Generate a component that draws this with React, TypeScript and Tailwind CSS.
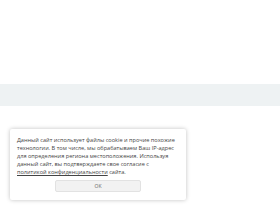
export default function App() {
  return (
    <div className="relative w-[280px] h-[210px] bg-white overflow-hidden font-['Open_Sans',sans-serif]">
      {/* page content behind */}
      <div className="h-[84px]" />
      <div className="h-[22px] bg-[#eef2f3]" />

      {/* Cookie notice */}
      <div className="absolute left-[10px] bottom-[10px] w-[176px] bg-white rounded-[2px] shadow-[0_0_4px_rgba(0,0,0,0.25)] px-[7px] pt-[7px] pb-[8px]">
        <p className="text-[5.6px] leading-[8px] text-[#444] whitespace-nowrap">
          Данный сайт использует файлы cookie и прочие похожие
          <br />
          технологии. В том числе, мы обрабатываем Ваш IP-адрес
          <br />
          для определения региона местоположения. Используя
          <br />
          данный сайт, вы подтверждаете свое согласие с
          <br />
          <a href="#" className="underline">политикой конфиденциальности</a> сайта.
        </p>
        <div className="flex justify-center mt-[4px]">
          <button className="w-[86px] h-[12px] bg-[#f2f2f2] border border-[#e2e2e2] rounded-[2px] text-[5px] leading-none text-[#666]">
            OK
          </button>
        </div>
      </div>
    </div>
  )
}
